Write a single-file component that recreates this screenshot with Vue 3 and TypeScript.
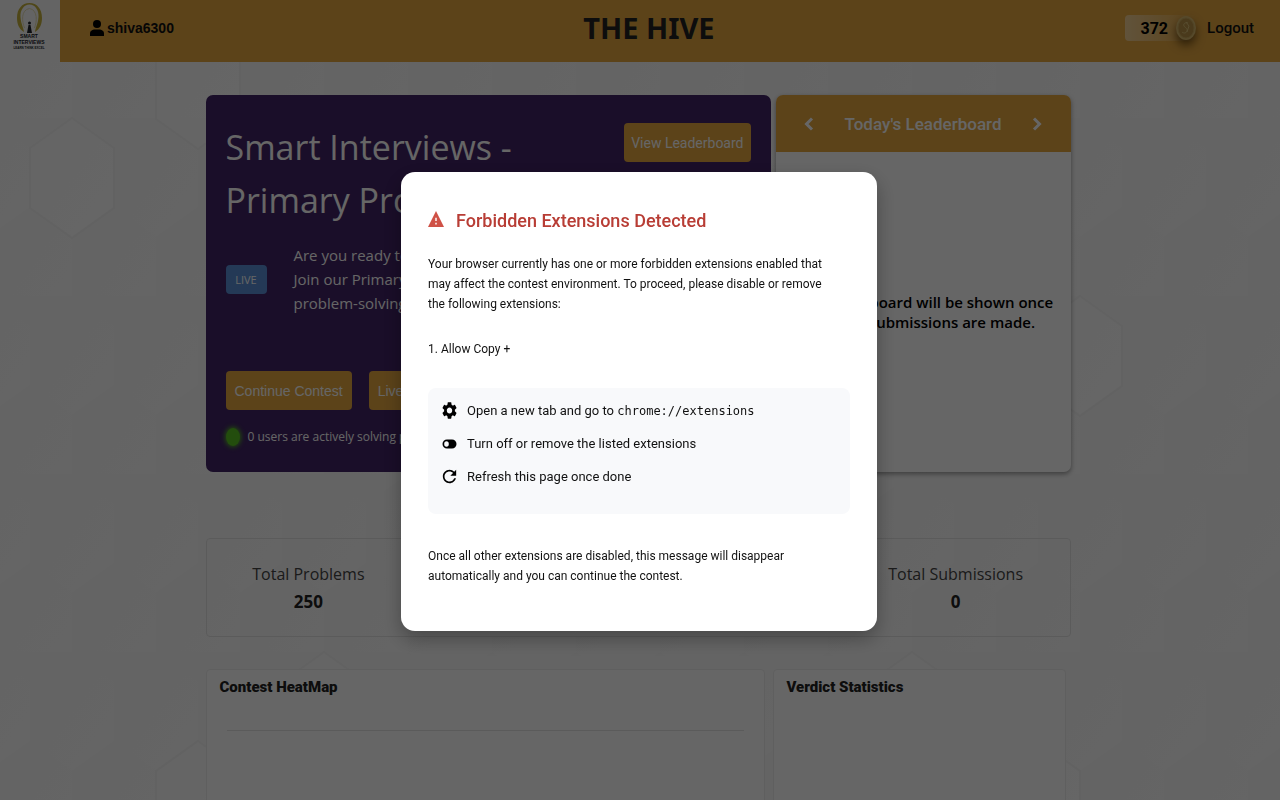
<script setup lang="ts">
interface HexCell {
  x: number
  y: number
}

interface Stat {
  label: string
  value: number
  column: number
}

const raisedCells: HexCell[] = [
  { x: 198, y: 89 },
  { x: 72, y: 178 },
  { x: 1080, y: 356 },
  { x: 324, y: 712 },
  { x: 912, y: 712 },
  { x: 198, y: 801 },
  { x: 1038, y: 801 },
]

const hexPoints = (c: HexCell): string =>
  [
    [c.x, c.y - 60],
    [c.x + 42, c.y - 30],
    [c.x + 42, c.y + 30],
    [c.x, c.y + 60],
    [c.x - 42, c.y + 30],
    [c.x - 42, c.y - 30],
  ]
    .map((p) => p.join(','))
    .join(' ')

const stats: Stat[] = [
  { label: 'Total Problems', value: 250, column: 1 },
  { label: 'Total Submissions', value: 0, column: 4 },
]

const blocked: string[] = ['Allow Copy +']
</script>

<template>
  <div class="shell">
    <svg class="honeycomb" aria-hidden="true">
      <defs>
        <linearGradient id="cell" x1="0" y1="0" x2="1" y2="1">
          <stop offset="0" stop-color="#f9f9f9" />
          <stop offset="1" stop-color="#fdfdfd" />
        </linearGradient>
        <pattern id="comb" x="30" y="118" width="84" height="178" patternUnits="userSpaceOnUse">
          <rect width="84" height="178" fill="#fbfbfb" />
          <polygon points="42,0 84,30 84,89 42,119 0,89 0,30" fill="url(#cell)" />
          <polygon points="0,89 42,119 42,178 0,208 -42,178 -42,119" fill="url(#cell)" />
          <polygon points="84,89 126,119 126,178 84,208 42,178 42,119" fill="url(#cell)" />
        </pattern>
      </defs>
      <rect width="100%" height="100%" fill="url(#comb)" />
      <polygon v-for="c in raisedCells" :key="`${c.x}-${c.y}`" class="raised" :points="hexPoints(c)" />
    </svg>

    <header class="topbar">
      <a class="logo" href="#" aria-label="Smart Interviews">
        <svg viewBox="0 0 60 62" width="60" height="62">
          <path
            fill-rule="evenodd"
            d="M24 32C19 29 17 24 17 18C17 9 22 3 29.500 3S42 9 42 18C42 24 40 29 35 32C35 29 38 24 38.500 17C39 10 35 4.500 29.500 4.500S20 10 20.500 17C21 24 24 29 24 32Z"
            fill="#c6b23e"
          />
          <path d="M24.500 28C22 22 20.500 10 29.500 8.500C38 10 37 22 34.500 28" fill="none" stroke="#e6deb0" />
          <circle cx="29.500" cy="23" r="1.500" fill="#22242c" />
          <path d="M28.500 25h2l1.500 8h-5z" fill="#22242c" />
          <text x="29" y="38" text-anchor="middle" font-size="5">SMART</text>
          <text x="29" y="44" text-anchor="middle" font-size="5">INTERVIEWS</text>
          <text x="29" y="49" text-anchor="middle" font-size="3">LEARN THINK EXCEL</text>
        </svg>
      </a>
      <a class="user" href="#">
        <svg viewBox="0 0 14 16" width="14" height="16" aria-hidden="true">
          <circle cx="7" cy="4" r="4" />
          <path d="M0 16v-2.500C0 10.500 3 9.500 4.500 9.500h5c1.500 0 4.500 1 4.500 4V16z" />
        </svg>
        shiva6300
      </a>
      <h1>THE HIVE</h1>
      <div class="account">
        <div class="coins">
          <span>372</span>
          <svg viewBox="0 0 22 26" width="22" height="26" aria-hidden="true">
            <ellipse cx="11" cy="13" rx="10" ry="12" fill="#d6b76c" />
            <ellipse cx="11" cy="13" rx="8" ry="10" fill="#b89246" stroke="#c9a85c" />
            <path d="M13 8c-3-1-5 1-4 3s4 2 3 5-4 2-5 1M11 7l3 4-2 6" fill="none" stroke="#dcc078" />
          </svg>
        </div>
        <button class="logout" type="button">Logout</button>
      </div>
    </header>

    <main>
      <div class="hero-row">
        <section class="contest">
          <div class="contest-head">
            <h2>Smart Interviews - Primary Problems</h2>
            <button class="gold" type="button">View Leaderboard</button>
          </div>
          <div class="contest-info">
            <span class="live">LIVE</span>
            <p>Are you ready to compete?<br />Join our Primary contest of<br />problem-solving today.</p>
          </div>
          <div class="contest-actions">
            <button class="gold" type="button">Continue Contest</button>
            <button class="gold" type="button">Live Contest</button>
          </div>
          <p class="active"><i class="pulse"></i>0 users are actively solving problems</p>
        </section>

        <section class="board">
          <div class="board-head">
            <button type="button" aria-label="Previous">
              <svg viewBox="0 0 10 14" width="10" height="14"><path d="M8 1.500L2.500 7L8 12.500" /></svg>
            </button>
            <h3>Today's Leaderboard</h3>
            <button type="button" aria-label="Next">
              <svg viewBox="0 0 10 14" width="10" height="14"><path d="M2 1.500L7.500 7L2 12.500" /></svg>
            </button>
          </div>
          <p class="board-empty">The leaderboard will be shown once<br />contest submissions are made.</p>
        </section>
      </div>

      <dl class="stats">
        <div v-for="s in stats" :key="s.label" class="stat" :style="{ gridColumn: s.column }">
          <dt>{{ s.label }}</dt>
          <dd>{{ s.value }}</dd>
        </div>
      </dl>

      <div class="panels">
        <section class="panel">
          <h4>Contest HeatMap</h4>
          <hr />
        </section>
        <section class="panel">
          <h4>Verdict Statistics</h4>
        </section>
      </div>
    </main>

    <div class="overlay">
      <div class="modal" role="alertdialog" aria-modal="true" aria-labelledby="modal-title">
        <h2 id="modal-title">
          <svg viewBox="1 2 22 19" width="16" height="16" preserveAspectRatio="none" aria-hidden="true">
            <path d="M1 21h22L12 2 1 21zm12-3h-2v-2h2v2zm0-4h-2v-4h2v4z" />
          </svg>
          Forbidden Extensions Detected
        </h2>
        <p>
          Your browser currently has one or more forbidden extensions enabled that may affect the contest
          environment. To proceed, please disable or remove the following extensions:
        </p>
        <ol>
          <li v-for="name in blocked" :key="name">{{ name }}</li>
        </ol>
        <ul class="steps">
          <li>
            <svg viewBox="2 2 20 20" width="15" height="17" preserveAspectRatio="none" aria-hidden="true">
              <path
                d="M19.140 12.940c.04-.3.060-.61.060-.94 0-.32-.02-.64-.07-.94l2.030-1.580c.18-.14.23-.41.12-.61l-1.920-3.320c-.12-.22-.37-.29-.59-.22l-2.390.96c-.5-.38-1.030-.7-1.620-.94l-.36-2.540c-.04-.24-.24-.41-.48-.41h-3.840c-.24 0-.43.17-.47.41l-.36 2.540c-.59.24-1.130.57-1.620.94l-2.390-.96c-.22-.08-.47 0-.59.22L2.740 8.870c-.12.21-.08.47.12.61l2.030 1.580c-.05.3-.09.63-.09.94s.02.64.07.94l-2.030 1.580c-.18.14-.23.41-.12.61l1.920 3.320c.12.22.37.29.59.22l2.390-.96c.5.38 1.030.7 1.620.94l.36 2.540c.05.24.24.41.48.41h3.840c.24 0 .44-.17.47-.41l.36-2.540c.59-.24 1.130-.56 1.620-.94l2.390.96c.22.08.47 0 .59-.22l1.920-3.320c.12-.22.070-.47-.12-.61l-2.010-1.580zM12 15.600c-1.980 0-3.600-1.620-3.600-3.600s1.620-3.600 3.600-3.600 3.600 1.620 3.600 3.600-1.620 3.600-3.600 3.600z"
              />
            </svg>
            <span>Open a new tab and go to <code>chrome://extensions</code></span>
          </li>
          <li>
            <svg viewBox="0 0 15 10" width="15" height="10" aria-hidden="true">
              <path
                fill-rule="evenodd"
                d="M5 .500h5a4.500 4.500 0 0 1 0 9H5a4.500 4.500 0 0 1 0-9zM4.500 2.300a2.300 2.700 0 1 0 0 5.400 2.300 2.700 0 0 0 0-5.400z"
              />
            </svg>
            <span>Turn off or remove the listed extensions</span>
          </li>
          <li>
            <svg viewBox="3 3 18 18" width="15" height="15" aria-hidden="true">
              <path
                d="M17.650 6.350C16.200 4.900 14.210 4 12 4c-4.420 0-7.990 3.580-7.990 8s3.570 8 7.990 8c3.730 0 6.840-2.550 7.730-6h-2.080c-.82 2.330-3.040 4-5.650 4-3.310 0-6-2.690-6-6s2.690-6 6-6c1.660 0 3.140.69 4.220 1.780L13 11h7V4l-2.350 2.350z"
              />
            </svg>
            <span>Refresh this page once done</span>
          </li>
        </ul>
        <p>Once all other extensions are disabled, this message will disappear automatically and you can continue the contest.</p>
      </div>
    </div>
  </div>
</template>

<style>
body {
  margin: 0;
}
</style>

<style scoped>
.shell {
  position: relative;
  height: 100vh;
  overflow: hidden;
  background: #fbfbfb;
  font-family: 'Open Sans', 'Noto Sans', sans-serif;
  color: #111;
}
.shell *,
.shell *::before {
  box-sizing: border-box;
}
h1,
h2,
h3,
h4,
p,
dl,
dd,
ul,
ol {
  margin: 0;
  padding: 0;
}
a {
  color: inherit;
  text-decoration: none;
}
button {
  border: 0;
  padding: 0;
  background: none;
  color: inherit;
  font-family: inherit;
}
.honeycomb {
  position: absolute;
  inset: 0;
  width: 100%;
  height: 100%;
}
.raised {
  fill: #fff;
  fill-opacity: 0.5;
  stroke: #f5f5f5;
  stroke-width: 2;
}
.topbar {
  position: relative;
  display: grid;
  grid-template-columns: 60px 1fr auto 1fr;
  grid-template-rows: 56px;
  align-items: center;
  height: 62px;
  padding-right: 26px;
  background: #e5a740;
}
.logo {
  align-self: start;
  height: 62px;
  background: #fafafa;
}
.logo text {
  font-family: 'Liberation Sans', sans-serif;
  font-weight: 700;
  fill: #22242c;
}
.user {
  display: flex;
  align-items: center;
  gap: 3px;
  margin-left: 30px;
  font: 700 14px/20px 'Liberation Sans', sans-serif;
}
h1 {
  padding-right: 16px;
  font-family: 'Noto Sans', sans-serif;
  font-size: 29px;
  line-height: 40px;
  font-weight: 700;
  color: #222;
}
.account {
  display: flex;
  justify-content: flex-end;
  align-items: center;
  gap: 10px;
  font-family: Roboto, sans-serif;
}
.coins {
  display: flex;
  align-items: center;
  justify-content: flex-end;
  gap: 7px;
  width: 72px;
  height: 26px;
  border-radius: 4px;
  background: linear-gradient(90deg, #f2cf94, #e5a740);
  font-size: 16px;
  font-weight: 700;
  color: #000;
}
.coins svg {
  filter: drop-shadow(0 5px 5px rgba(60, 35, 0, 0.7));
}
.logout {
  font-size: 15px;
  line-height: 20px;
  font-weight: 500;
}
main {
  width: 68%;
  max-width: 865px;
  position: relative;
  margin: 33px auto 0;
  left: -2px;
}
.hero-row {
  display: grid;
  grid-template-columns: 565fr 295fr;
  gap: 5px;
}
.contest {
  display: flex;
  flex-direction: column;
  min-height: 377px;
  padding: 26px 20px 20px;
  border-radius: 7px;
  background: #412366;
  color: #fff;
}
.contest-head {
  display: flex;
  align-items: flex-start;
  justify-content: space-between;
  gap: 40px;
}
.contest h2 {
  font-size: 34px;
  line-height: 53px;
  font-weight: 500;
}
.gold {
  flex: none;
  height: 39px;
  padding: 0 9px;
  border-radius: 4px;
  background: #e5a740;
  color: #fff;
  font: 400 14px/20px 'Liberation Sans', sans-serif;
}
.contest-head .gold {
  margin-top: 2px;
  padding: 0 7px;
  font-family: Roboto, sans-serif;
}
.contest-info {
  display: flex;
  align-items: center;
  gap: 27px;
  margin-top: 16px;
}
.live {
  width: 41px;
  border-radius: 4px;
  background: #5b8fd6;
  font-size: 11px;
  line-height: 29px;
  text-align: center;
}
.contest-info p {
  font-size: 15px;
  line-height: 24px;
  font-weight: 500;
}
.contest-actions {
  display: flex;
  gap: 17px;
  margin-top: 56px;
}
.active {
  display: flex;
  align-items: center;
  gap: 8px;
  margin-top: 16px;
  font-size: 12px;
  line-height: 22px;
}
.pulse {
  width: 14px;
  height: 18px;
  border-radius: 50%;
  background: #58c022;
  box-shadow: 0 0 5px 1px #58c022;
}
.board {
  display: flex;
  flex-direction: column;
  border-radius: 7px;
  background: #fff;
  box-shadow: 0 2px 5px rgba(0, 0, 0, 0.4);
}
.board-head {
  display: flex;
  align-items: center;
  justify-content: space-between;
  height: 57px;
  padding: 0 28px;
  border-radius: 7px 7px 0 0;
  background: #e5a740;
  color: #fff;
}
.board-head svg {
  display: block;
  fill: none;
  stroke: currentColor;
  stroke-width: 3;
}
.board-head h3 {
  font: 500 17px/24px Roboto, sans-serif;
}
.board-empty {
  margin: auto 0;
  font-size: 15px;
  line-height: 20px;
  font-weight: 600;
  text-align: center;
  color: #000;
}
.stats {
  display: grid;
  grid-template-columns: repeat(4, 1fr);
  min-height: 99px;
  margin-top: 66px;
  padding-top: 20px;
  border: 1px solid #e4e4e4;
  border-radius: 4px;
}
.stat {
  padding-right: 12px;
  text-align: center;
}
dt {
  font-size: 16px;
  line-height: 30px;
  color: #444;
}
dd {
  font-size: 17px;
  line-height: 26px;
  font-weight: 700;
  color: #222;
}
.panels {
  display: grid;
  grid-template-columns: 559fr 293fr;
  gap: 8px;
  margin: 32px 5px 0 0;
}
.panel {
  min-height: 240px;
  padding: 7px 13px;
  border: 1px solid #ededed;
  border-radius: 4px;
  background: #fff;
}
h4 {
  font: 900 15px/20px Roboto, sans-serif;
  color: #222;
}
hr {
  height: 1px;
  margin: 33px 7px 0;
  border: 0;
  background: #e4e4e4;
}
.overlay {
  position: fixed;
  inset: 0;
  display: flex;
  align-items: center;
  justify-content: center;
  padding: 2px 2px 0 0;
  background: rgba(0, 0, 0, 0.6);
}
.modal {
  width: 476px;
  max-width: 94%;
  padding: 34px 27px 45px;
  border-radius: 14px;
  background: #fff;
  box-shadow: 0 8px 20px rgba(0, 0, 0, 0.3);
  font-family: Roboto, sans-serif;
  font-size: 12px;
  line-height: 20px;
  color: #111;
}
.modal h2 {
  display: flex;
  align-items: center;
  gap: 12px;
  font-size: 18px;
  line-height: 30px;
  font-weight: 500;
  color: #b83d35;
}
.modal h2 svg {
  margin-bottom: 4px;
  fill: #cf5146;
}
.modal p {
  max-width: 412px;
  margin-top: 18px;
}
.modal ol {
  margin-top: 25px;
  list-style-position: inside;
}
.modal .steps {
  display: grid;
  gap: 9px;
  min-height: 126px;
  align-content: start;
  margin-top: 29px;
  padding: 11px 14px;
  border-radius: 8px;
  background: #f8f9fb;
  list-style: none;
  font-size: 13px;
  line-height: 24px;
}
.steps li {
  display: flex;
  align-items: center;
  gap: 10px;
  height: 24px;
}
.steps svg {
  fill: #000;
}
.steps code {
  font-family: 'DejaVu Sans Mono', monospace;
  font-size: 12px;
}
.modal .steps + p {
  margin-top: 32px;
}
</style>
